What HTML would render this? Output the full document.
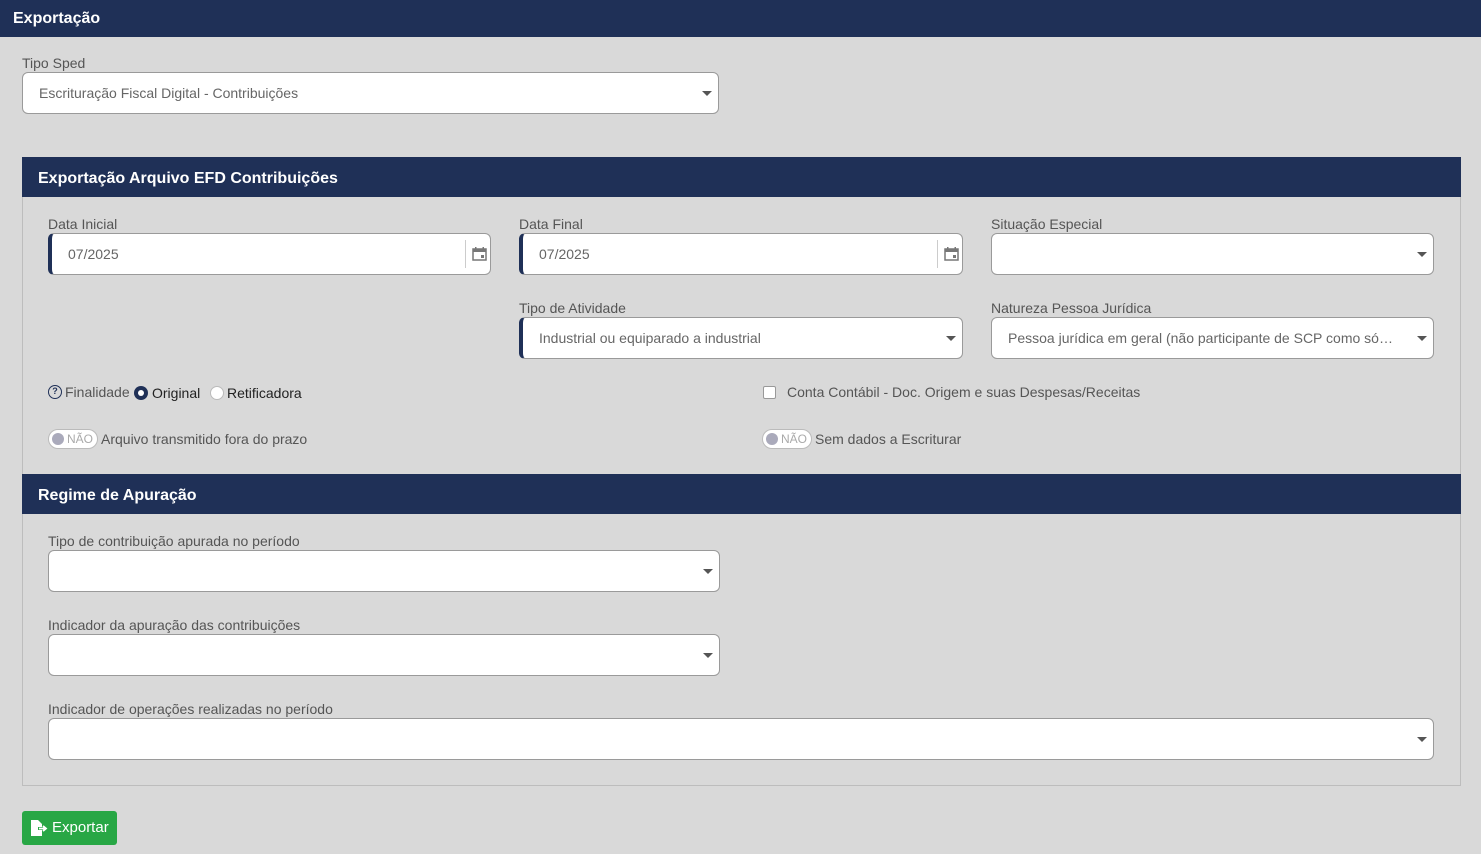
<!DOCTYPE html>
<html><head><meta charset="utf-8"><style>
*{box-sizing:border-box;margin:0;padding:0}
body{width:1481px;height:854px;background:#d9d9d9;font-family:"Liberation Sans",sans-serif;position:relative;overflow:hidden;color:#555}
.a{position:absolute}
.hdr{background:#1f3057;color:#fff;font-weight:bold;font-size:16px}
.lbl{font-size:14px;color:#555}
.inp{position:absolute;height:42px;background:#fff;border:1px solid #9a9a9a;border-radius:6px;font-size:14px;color:#666;padding:0 16px;line-height:40px;white-space:nowrap;overflow:hidden}
.inp.nv{border-left:4px solid #1f3057}
.car{position:absolute;right:6px;top:18px;width:0;height:0;border-left:5px solid transparent;border-right:5px solid transparent;border-top:5px solid #555}
.cal{position:absolute;right:0;top:6px;width:25px;height:28px;border-left:1px solid #ccc}
.tg{position:absolute;width:50px;height:20px;border:1px solid #bbb;border-radius:10px;background:#fff;font-size:12px;color:#aaa;line-height:18px;padding-left:18px}
.tg:before{content:"";position:absolute;left:3px;top:3px;width:12px;height:12px;border-radius:50%;background:#aab}
</style></head><body>
<div class="a hdr" style="left:0;top:0;width:1481px;height:37px;padding:10px 13px 0">Exportação</div>
<div class="a lbl" style="left:22px;top:55px">Tipo Sped</div>
<div class="inp" style="left:22px;top:72px;width:697px">Escrituração Fiscal Digital - Contribuições<span class="car"></span></div>

<div class="a" style="left:22px;top:157px;width:1439px;height:629px;border:1px solid #bdbdbd"></div>
<div class="a hdr" style="left:22px;top:157px;width:1439px;height:40px;padding:13px 16px 0">Exportação Arquivo EFD Contribuições</div>

<div class="a lbl" style="left:48px;top:216px">Data Inicial</div>
<div class="inp nv" style="left:48px;top:233px;width:443px">07/2025<span class="cal"><svg width="25" height="28" viewBox="0 0 25 28"><rect x="7" y="9" width="13" height="11" fill="none" stroke="#777" stroke-width="1.5"/><rect x="7" y="9" width="13" height="3" fill="#777"/><rect x="9" y="7" width="1.5" height="3" fill="#777"/><rect x="16.5" y="7" width="1.5" height="3" fill="#777"/><rect x="15" y="15" width="3" height="3" fill="#777"/></svg></span></div>
<div class="a lbl" style="left:519px;top:216px">Data Final</div>
<div class="inp nv" style="left:519px;top:233px;width:444px">07/2025<span class="cal"><svg width="25" height="28" viewBox="0 0 25 28"><rect x="7" y="9" width="13" height="11" fill="none" stroke="#777" stroke-width="1.5"/><rect x="7" y="9" width="13" height="3" fill="#777"/><rect x="9" y="7" width="1.5" height="3" fill="#777"/><rect x="16.5" y="7" width="1.5" height="3" fill="#777"/><rect x="15" y="15" width="3" height="3" fill="#777"/></svg></span></div>
<div class="a lbl" style="left:991px;top:216px">Situação Especial</div>
<div class="inp" style="left:991px;top:233px;width:443px"><span class="car"></span></div>

<div class="a lbl" style="left:519px;top:300px">Tipo de Atividade</div>
<div class="inp nv" style="left:519px;top:317px;width:444px">Industrial ou equiparado a industrial<span class="car"></span></div>
<div class="a lbl" style="left:991px;top:300px">Natureza Pessoa Jurídica</div>
<div class="inp" style="left:991px;top:317px;width:443px;padding-right:36px;text-overflow:ellipsis">Pessoa jurídica em geral (não participante de SCP como sóci...<span class="car"></span></div>

<div class="a" style="left:48px;top:385px;width:14px;height:14px;border:1.5px solid #1f3057;border-radius:50%;font-size:9px;color:#1f3057;text-align:center;line-height:11px;font-weight:bold">?</div>
<div class="a lbl" style="left:65px;top:384px">Finalidade</div>
<div class="a" style="left:134px;top:386px;width:14px;height:14px;border-radius:50%;background:#1f3057"><div style="position:absolute;left:4px;top:4px;width:6px;height:6px;border-radius:50%;background:#fff"></div></div>
<div class="a" style="left:152px;top:385px;font-size:14px;color:#222">Original</div>
<div class="a" style="left:210px;top:386px;width:14px;height:14px;border-radius:50%;background:#fff;border:1px solid #bbb"></div>
<div class="a" style="left:227px;top:385px;font-size:14px;color:#222">Retificadora</div>

<div class="a" style="left:763px;top:386px;width:13px;height:13px;background:#fff;border:1px solid #999;border-radius:2px"></div>
<div class="a lbl" style="left:787px;top:384px">Conta Contábil - Doc. Origem e suas Despesas/Receitas</div>

<div class="tg" style="left:48px;top:429px">NÃO</div>
<div class="a lbl" style="left:101px;top:431px">Arquivo transmitido fora do prazo</div>
<div class="tg" style="left:762px;top:429px">NÃO</div>
<div class="a lbl" style="left:815px;top:431px">Sem dados a Escriturar</div>

<div class="a hdr" style="left:22px;top:474px;width:1439px;height:40px;padding:13px 16px 0">Regime de Apuração</div>
<div class="a lbl" style="left:48px;top:533px">Tipo de contribuição apurada no período</div>
<div class="inp" style="left:48px;top:550px;width:672px"><span class="car"></span></div>
<div class="a lbl" style="left:48px;top:617px">Indicador da apuração das contribuições</div>
<div class="inp" style="left:48px;top:634px;width:672px"><span class="car"></span></div>
<div class="a lbl" style="left:48px;top:701px">Indicador de operações realizadas no período</div>
<div class="inp" style="left:48px;top:718px;width:1386px"><span class="car"></span></div>

<div class="a" style="left:22px;top:811px;width:95px;height:34px;background:#28a745;border-radius:3px;color:#fff;font-size:15px;line-height:34px;padding-left:30px">Exportar
<svg class="a" style="left:9px;top:9px" width="18" height="16" viewBox="0 0 18 16"><path d="M0 0h7l4 4v3H7v3h4v6H0z" fill="#fff"/><path d="M8 8.5h6M12 6l3 2.5-3 2.5" stroke="#fff" stroke-width="1.8" fill="none"/></svg></div>
</body></html>
